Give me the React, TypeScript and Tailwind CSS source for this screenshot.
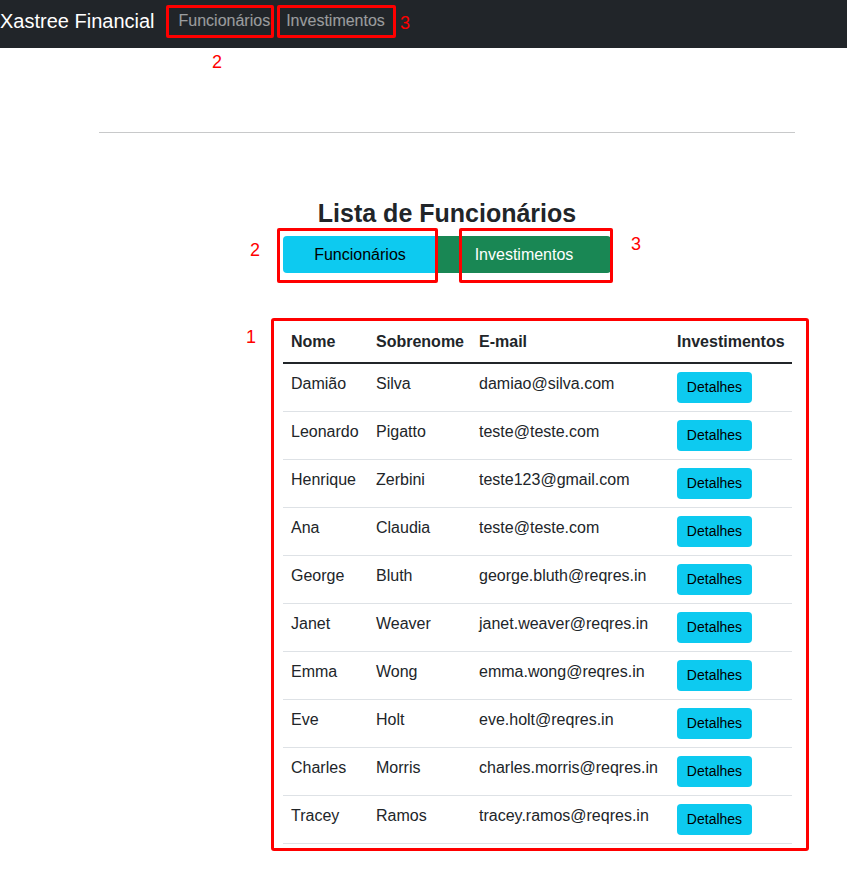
const funcionarios = [
  { nome: "Damião", sobrenome: "Silva", email: "damiao@silva.com" },
  { nome: "Leonardo", sobrenome: "Pigatto", email: "teste@teste.com" },
  { nome: "Henrique", sobrenome: "Zerbini", email: "teste123@gmail.com" },
  { nome: "Ana", sobrenome: "Claudia", email: "teste@teste.com" },
  { nome: "George", sobrenome: "Bluth", email: "george.bluth@reqres.in" },
  { nome: "Janet", sobrenome: "Weaver", email: "janet.weaver@reqres.in" },
  { nome: "Emma", sobrenome: "Wong", email: "emma.wong@reqres.in" },
  { nome: "Eve", sobrenome: "Holt", email: "eve.holt@reqres.in" },
  { nome: "Charles", sobrenome: "Morris", email: "charles.morris@reqres.in" },
  { nome: "Tracey", sobrenome: "Ramos", email: "tracey.ramos@reqres.in" },
]

export default function App() {
  return (
    <div
      className="relative min-h-screen bg-white text-[#212529] text-[16px]"
      style={{ fontFamily: '"Liberation Sans", Arial, sans-serif' }}
    >
      <nav className="flex h-12 items-center bg-[#212529] pb-1.5">
        <a className="mr-4 text-[20px] leading-[30px] text-white">Xastree Financial</a>
        <a className="px-2 leading-6 text-white/55">Funcionários</a>
        <a className="px-2 leading-6 text-white/55">Investimentos</a>
      </nav>

      <div className="ml-[99px] w-[696px] pt-[84px]">
        <hr className="border-t border-[#c8c9ca]" />

        <div className="ml-[184px] mt-[65px] w-[509px]">
          <div className="w-[328px]">
            <h3 className="whitespace-nowrap text-center text-[25px] font-bold leading-[30px]">
              Lista de Funcionários
            </h3>
            <div className="mt-2 flex">
              <button className="h-[37px] w-[154px] rounded-l-[4px] bg-[#0dcaf0] text-black">Funcionários</button>
              <button className="h-[37px] w-[174px] rounded-r-[4px] bg-[#198754] text-white">Investimentos</button>
            </div>
          </div>

          <table className="mt-[49px] w-[509px] table-fixed border-collapse">
            <colgroup>
              <col className="w-[85px]" />
              <col className="w-[103px]" />
              <col className="w-[198px]" />
              <col className="w-[123px]" />
            </colgroup>
            <thead>
              <tr className="border-b-2 border-[#212529]">
                <th className="p-2 text-left font-bold leading-6">Nome</th>
                <th className="p-2 text-left font-bold leading-6">Sobrenome</th>
                <th className="p-2 text-left font-bold leading-6">E-mail</th>
                <th className="whitespace-nowrap p-2 text-left font-bold leading-6">Investimentos</th>
              </tr>
            </thead>
            <tbody>
              {funcionarios.map((f, i) => (
                <tr key={i} className="border-b border-[#dee2e6]">
                  <td className="p-2 align-top leading-6">{f.nome}</td>
                  <td className="p-2 align-top leading-6">{f.sobrenome}</td>
                  <td className="whitespace-nowrap p-2 align-top leading-6">{f.email}</td>
                  <td className="p-2 align-top">
                    <button className="h-[31px] w-[75px] rounded-[4px] bg-[#0dcaf0] text-[14px] text-black">Detalhes</button>
                  </td>
                </tr>
              ))}
            </tbody>
          </table>
        </div>
      </div>

      {/* anotações */}
      <div className="pointer-events-none absolute left-[166px] top-[5px] h-[33px] w-[108px] rounded-[2px] border-[3px] border-[#ff0000]" />
      <div className="pointer-events-none absolute left-[277px] top-[5px] h-[33px] w-[119px] rounded-[2px] border-[3px] border-[#ff0000]" />
      <span className="absolute left-[400px] top-[11px] text-[18px] leading-6 text-[#ff0000]">3</span>
      <span className="absolute left-[212px] top-[50px] text-[18px] leading-6 text-[#ff0000]">2</span>

      <div className="pointer-events-none absolute left-[277px] top-[228px] h-[55px] w-[161px] rounded-[2px] border-[3px] border-[#ff0000]" />
      <div className="pointer-events-none absolute left-[459px] top-[228px] h-[55px] w-[154px] rounded-[2px] border-[3px] border-[#ff0000]" />
      <span className="absolute left-[250px] top-[238px] text-[18px] leading-6 text-[#ff0000]">2</span>
      <span className="absolute left-[631px] top-[232px] text-[18px] leading-6 text-[#ff0000]">3</span>

      <div className="pointer-events-none absolute left-[271px] top-[318px] h-[533px] w-[538px] rounded-[3px] border-[3px] border-[#ff0000]" />
      <span className="absolute left-[246px] top-[325px] text-[18px] leading-6 text-[#ff0000]">1</span>
    </div>
  )
}
